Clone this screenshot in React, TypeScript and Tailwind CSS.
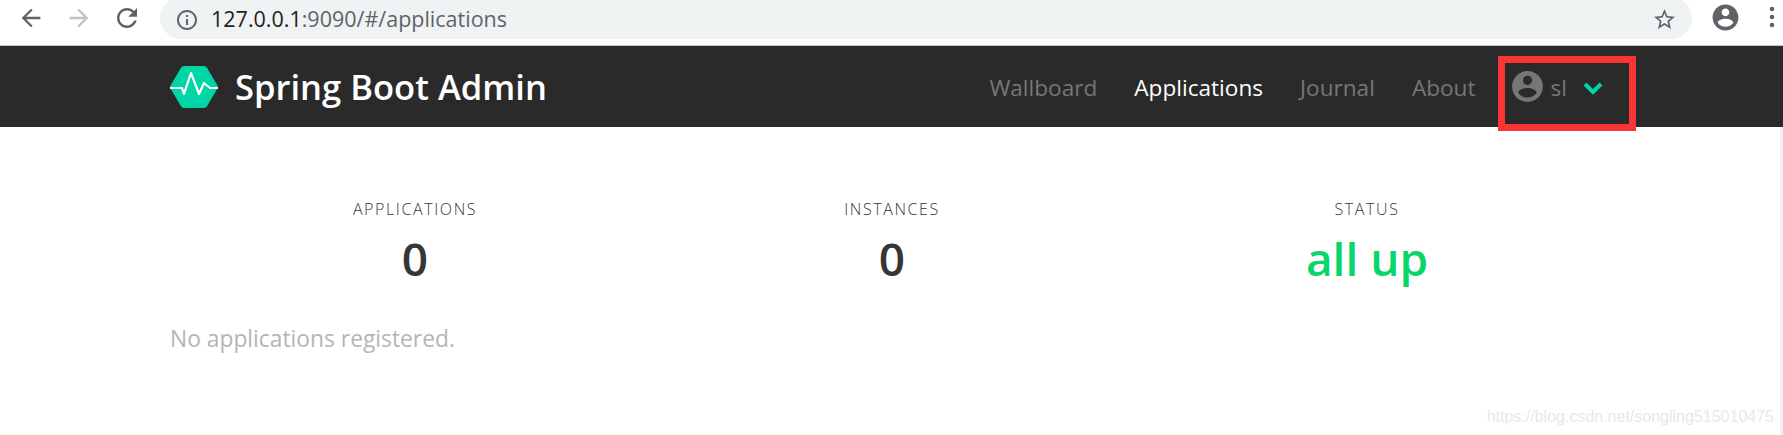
import React from 'react';

const ACCOUNT =
  'M12 2C6.48 2 2 6.48 2 12s4.48 10 10 10 10-4.48 10-10S17.52 2 12 2zm0 3c1.66 0 3 1.34 3 3s-1.34 3-3 3-3-1.34-3-3 1.34-3 3-3zm0 14.2c-2.5 0-4.71-1.28-6-3.22.03-1.99 4-3.08 6-3.08 1.99 0 5.97 1.09 6 3.08-1.29 1.94-3.5 3.22-6 3.22z';
const ARROW = 'M20 11H7.83l5.59-5.59L12 4l-8 8 8 8 1.41-1.41L7.83 13H20v-2z';

function ChromeBar() {
  return (
    <div className="flex h-[46px] items-start overflow-hidden border-b border-[#c4c4c4] bg-white">
      <div className="flex h-[36px] w-[160px] items-center pl-[17px] text-[#5f6368]">
        <svg width="28" height="28" viewBox="0 0 24 24" fill="currentColor">
          <path d={ARROW} />
        </svg>
        <svg width="28" height="28" viewBox="0 0 24 24" fill="#bdc1c6" className="ml-[20px] rotate-180">
          <path d={ARROW} />
        </svg>
        <svg width="30" height="30" viewBox="0 0 24 24" fill="currentColor" className="ml-[19px]">
          <path d="M17.65 6.35C16.2 4.9 14.21 4 12 4c-4.42 0-7.99 3.58-7.99 8s3.57 8 7.99 8c3.73 0 6.84-2.55 7.73-6h-2.08c-.82 2.33-3.04 4-5.65 4-3.31 0-6-2.69-6-6s2.69-6 6-6c1.66 0 3.14.69 4.22 1.78L13 11h7V4l-2.35 2.35z" />
        </svg>
      </div>
      <div className="-mt-[3px] flex h-[42px] w-[1532px] items-center rounded-[21px] bg-[#f0f3f4] pl-[15px] pr-[15px] pt-[3px]">
        <svg width="24" height="24" viewBox="0 0 24 24" fill="#5f6368">
          <path d="M11 7h2v2h-2zm0 4h2v6h-2zm1-9C6.48 2 2 6.48 2 12s4.48 10 10 10 10-4.48 10-10S17.52 2 12 2zm0 18c-4.41 0-8-3.59-8-8s3.59-8 8-8 8 3.59 8 8-3.59 8-8 8z" />
        </svg>
        <span className="ml-[12px] text-[21.5px] text-[#5f6368]">
          <span className="text-[#202124]">127.0.0.1</span>:9090/#/applications
        </span>
        <svg width="25" height="25" viewBox="0 0 24 24" fill="#5f6368" className="ml-auto">
          <path d="M22 9.24l-7.19-.62L12 2 9.19 8.63 2 9.24l5.46 4.73L5.82 21 12 17.27 18.18 21l-1.63-7.03L22 9.24zM12 15.4l-3.76 2.27 1-4.28-3.32-2.88 4.38-.38L12 6.1l1.71 4.04 4.38.38-3.32 2.88 1 4.28L12 15.4z" />
        </svg>
      </div>
      <div className="flex h-[34px] flex-1 items-center pl-[18px] text-[#5f6368]">
        <svg width="31" height="31" viewBox="0 0 24 24" fill="currentColor">
          <path d={ACCOUNT} />
        </svg>
        <svg width="6" height="22" viewBox="0 0 6 22" fill="currentColor" className="ml-[28px]">
          <circle cx="3" cy="3" r="2.3" />
          <circle cx="3" cy="11" r="2.3" />
          <circle cx="3" cy="19" r="2.3" />
        </svg>
      </div>
    </div>
  );
}

function Navbar() {
  return (
    <nav className="relative flex h-[81px] items-center bg-[#2a2a2a] pl-[170px]">
      <svg width="48" height="42" viewBox="0 0 48 42">
        <path
          d="M14 0h20a3.5 3.5 0 0 1 3 1.7L47.3 19.2a3.5 3.5 0 0 1 0 3.6L37 40.3a3.5 3.5 0 0 1-3 1.7H14a3.5 3.5 0 0 1-3-1.7L.7 22.8a3.5 3.5 0 0 1 0-3.6L11 1.7A3.5 3.5 0 0 1 14 0z"
          fill="#00d5a5"
        />
        <path
          d="M0 22h12l2 6 7-21 8 21 5-11 6 5h8"
          fill="none"
          stroke="#fff"
          strokeWidth="2.2"
          strokeLinejoin="round"
        />
      </svg>
      <span className="ml-[17px] mt-[2px] text-[34.6px] font-semibold leading-none text-white">Spring Boot Admin</span>
      <div className="ml-auto flex items-center pr-[180px] pt-[2px] text-[22.6px] text-[#767676]">
        <a className="mr-[37px]">Wallboard</a>
        <a className="mr-[37px] text-white">Applications</a>
        <a className="mr-[37px]">Journal</a>
        <a className="mr-[33px]">About</a>
        <svg width="37" height="37" viewBox="0 0 24 24" fill="#767676" className="-mt-[2px]">
          <path d={ACCOUNT} />
        </svg>
        <span className="ml-[5px]">sl</span>
        <svg width="20" height="14" viewBox="0 0 20 14" fill="none" stroke="#00d5a5" strokeWidth="4" className="ml-[16px]">
          <path d="M2 3l8 8 8-8" />
        </svg>
      </div>
      <div className="absolute left-[1498px] top-[10px] h-[75px] w-[138px] border-[7px] border-[#f93434]" />
    </nav>
  );
}

function Stat({ label, value, green }: { label: string; value: string; green?: boolean }) {
  return (
    <div className="text-center">
      <p className="text-[16px] font-light leading-[20px] tracking-[1.6px] text-[#363636]">{label.toUpperCase()}</p>
      <p className={`mt-[10px] text-[46px] font-semibold leading-[58px] ${green ? 'text-[#0ad46c]' : 'text-[#363636]'}`}>
        {value}
      </p>
    </div>
  );
}

export default function App() {
  return (
    <div
      className="relative h-[435px] overflow-hidden bg-white"
      style={{ fontFamily: '"Open Sans", "Noto Sans", sans-serif' }}
    >
      <ChromeBar />
      <Navbar />
      <main className="pl-[170px] pt-[72px]">
        <div className="ml-[7px] grid w-[1428px] grid-cols-[476px_478px_472px]">
          <Stat label="Applications" value="0" />
          <Stat label="Instances" value="0" />
          <Stat label="Status" value="all up" green />
        </div>
        <p className="mt-[35px] text-[22.8px] text-[#b5b5b5]">No applications registered.</p>
      </main>
      <span
        className="absolute bottom-[6px] right-[9px] text-[16px] text-[#e8e8e8]"
        style={{ fontFamily: '"Liberation Sans", sans-serif' }}
      >
        https://blog.csdn.net/songling515010475
      </span>
      <div className="absolute right-0 top-[127px] h-[308px] w-[3px] bg-[#f1f1f1]" />
    </div>
  );
}
